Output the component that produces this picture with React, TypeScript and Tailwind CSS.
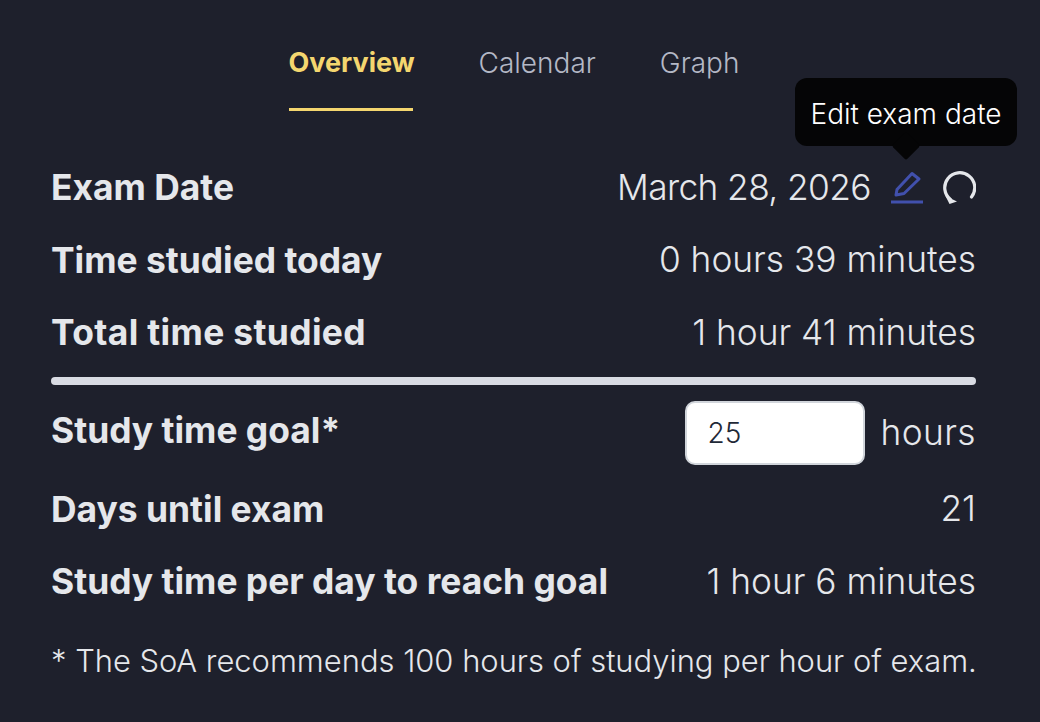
import { ReactNode } from "react";

const Row = ({ label, children, className = "", labelClass = "" }: { label: string; children: ReactNode; className?: string; labelClass?: string }) => (
    <div className={`flex items-center justify-between ${className}`}>
        <span className={`text-[35.4px] font-bold text-[#e5e7eb] ${labelClass}`}>{label}</span>
        <span className="text-[35.3px] font-light text-[#e5e7eb]">{children}</span>
    </div>
);

export default function App() {
    return (
        <div className="relative h-[722px] w-[1040px] overflow-hidden bg-[#1e202c] font-['Inter',sans-serif]">
            {/* Tabs */}
            <div className="flex h-[111px] justify-center gap-[65px] pr-[12px] pt-[44px] text-[28px] leading-[38px]">
                <div className="h-[67px] w-[124px] whitespace-nowrap border-b-[3px] border-[#f4d66f] text-[27px] font-bold text-[#f4d66f]">Overview</div>
                <div className="ml-[1px] font-light text-[#b4b8c6]">Calendar</div>
                <div className="-ml-[1px] font-light text-[#b4b8c6]">Graph</div>
            </div>

            <div className="pl-[51px] pr-[64px] pt-[41px]">
                <div className="flex h-[72px] items-center justify-between">
                    <span className="text-[35.4px] font-bold text-[#e5e7eb]">Exam Date</span>
                    <div className="flex items-center">
                        <span className="text-[35.3px] font-light tracking-[-0.6px] text-[#e5e7eb]">March 28, 2026</span>
                        <svg className="ml-[19px] text-[#4150ad]" width="34" height="34" viewBox="0 0 34 34" fill="none" stroke="currentColor" strokeWidth="3" strokeLinejoin="round">
                            <path d="M6 24 L7 18.500 L22 2.500 L29 8 L14 22.500 L6 24 Z" />
                            <path d="M1 31 H33" strokeWidth="3" />
                        </svg>
                        <svg className="ml-[18px] text-[#e5e7eb]" width="34" height="34" viewBox="0 0 34 34" fill="none" stroke="currentColor" strokeWidth="3.200" strokeLinecap="round">
                            <path d="M8.500 28.500 A15 15 0 1 1 29.500 26" />
                            <path d="M3.500 25 L7.500 33 L15 30.500 Z" fill="currentColor" stroke="none" />
                        </svg>
                    </div>
                </div>
                <Row label="Time studied today" className="h-[73px]">0 hours 39 minutes</Row>
                <Row label="Total time studied" labelClass="tracking-[0.35px]" className="h-[72px]">1 hour 41 minutes</Row>
                <div className="mt-[8px] h-[8px] rounded-full bg-[#d9dbe3]" />
                <div className="mt-[13px] flex h-[70px] items-center justify-between">
                    <span className="mb-[4px] text-[35.4px] font-bold text-[#e5e7eb]">Study time goal*</span>
                    <div className="flex items-center">
                        <input
                            readOnly
                            value="25"
                            className="h-[64px] w-[180px] rounded-[10px] border-2 border-[#d1d5db] bg-white px-[21px] text-[28px] font-light text-[#1f2937] outline-none"
                        />
                        <span className="ml-[16px] text-[35.3px] font-light tracking-[0.4px] text-[#e5e7eb]">hours</span>
                    </div>
                </div>
                <Row label="Days until exam" className="mt-[5px] h-[73px]">21</Row>
                <Row label="Study time per day to reach goal" className="h-[72px]">1 hour 6 minutes</Row>
                <p className="mt-[20px] whitespace-nowrap text-[30.9px] font-light text-[#e5e7eb]">* The SoA recommends 100 hours of studying per hour of exam.</p>
            </div>

            {/* Tooltip */}
            <div className="absolute left-[795px] top-[78px] flex h-[68px] w-[222px] items-center justify-center rounded-[12px] bg-[#050506] pt-[3px] text-[28px] font-light text-white">
                Edit exam date
                <div className="absolute bottom-[-10px] left-1/2 h-[20px] w-[20px] -translate-x-1/2 rotate-45 rounded-[2px] bg-[#050506]" />
            </div>
        </div>
    );
}
